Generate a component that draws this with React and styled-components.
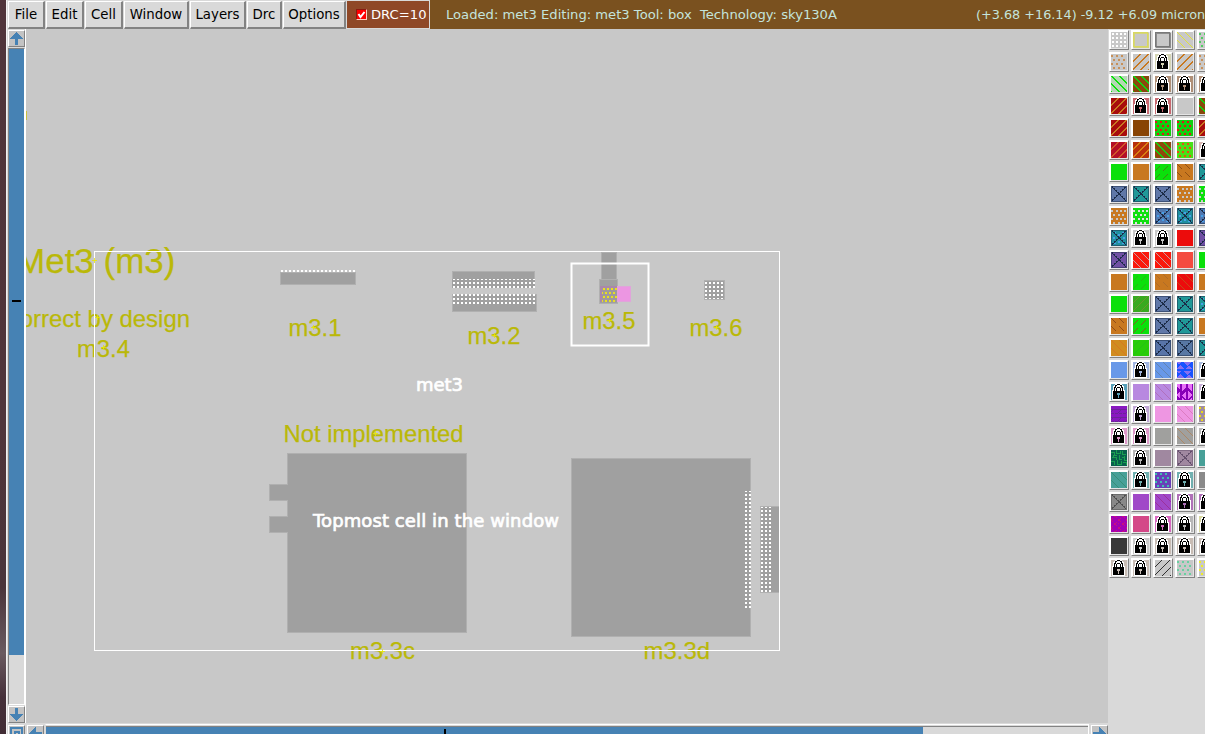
import React from 'react';
import styled, { createGlobalStyle } from 'styled-components';

const Global = createGlobalStyle`
  * { box-sizing: border-box; }
  body { margin: 0; overflow: hidden; background: #d9d9d9; }
`;

const Screen = styled.div`
  display: flex;
  width: 1205px;
  height: 734px;
  overflow: hidden;
  font: 13.33px "DejaVu Sans", sans-serif;
`;
const Desktop = styled.div`
  flex: 0 0 6px;
  background: linear-gradient(#50343a 0, #50353b 58%, #4a343a 80%, #6a5a60 89%, #45303a 95%, #412c34 100%);
`;
const Win = styled.div`
  flex: 1;
  min-width: 0;
  display: flex;
  flex-direction: column;
  background: #d9d9d9;
  border-left: 1px solid #f2f2f2;
`;
const TitleBar = styled.header`
  display: flex;
  flex: 0 0 29px;
  background: #7a511f;
  color: #c4e4dc;
  white-space: pre;
`;
const Menus = styled.nav`
  display: flex;
  gap: 1px;
  padding: 1px 0 0 1px;
  background: #d9d9d9;
`;
const MenuButton = styled.button`
  width: ${p => p.$w}px;
  height: 28px;
  padding: 0 0 1px;
  border: solid;
  border-width: 1px 2px 2px 1px;
  border-color: #fff #828282 #828282 #fff;
  background: #d9d9d9;
  color: #000;
  font: inherit;
`;
const Drc = styled.label`
  display: flex;
  align-items: center;
  gap: 4px;
  width: 83px;
  height: 28px;
  padding: 0 0 0 9px;
  border-bottom: 1px solid #d9d9d9;
  border-right: 1px solid #d9d9d9;
  background: #8f4827;
  color: #fff;
  font-size: 13.15px;
`;
const Check = styled.span`
  display: flex;
  width: 11px;
  height: 11px;
  background: #f00;
  border: solid;
  border-width: 1px;
  border-color: #8b1a10 #ffd0c0 #ffd0c0 #8b1a10;
`;
const Status = styled.div`
  flex: none;
  width: 546px;
  padding: 7px 0 0 16px;
  font-size: 13.13px;
`;
const Position = styled.div`
  padding-top: 7px;
  font-size: 12.8px;
`;
const Main = styled.main`
  display: flex;
  flex: 1;
  min-height: 0;
`;
const Work = styled.div`
  display: flex;
  flex-direction: column;
  width: 1101px;
`;
const WorkTop = styled.div`
  display: flex;
  flex: 0 0 694px;
`;
const VScroll = styled.div`
  display: flex;
  flex-direction: column;
  gap: 1px;
  width: 19px;
  padding: 1px 0 0 1px;
  border-right: 1px solid #fff;
`;
const WorkBottom = styled.div`
  display: flex;
  gap: 2px;
  padding: 2px 0 0 1px;
  height: 20px;
  align-items: flex-start;
`;
const ArrowButton = styled.div`
  display: flex;
  flex: none;
  width: 17px;
  height: 17px;
  border: solid;
  border-width: 1px;
  border-color: #fff #828282 #828282 #fff;
  background: #c3c3c3;
`;
const VTrack = styled.div`
  width: 17px;
  height: 657px;
  border: solid;
  border-width: 1px;
  border-color: #828282 #fff #fff #828282;
  background: linear-gradient(#4682b4 606px, #d9d9d9 606px);
  padding: 251px 2px 0 3px;
`;
const HTrack = styled.div`
  width: 1045px;
  height: 19px;
  margin: -1px 0 0 -1px;
  border: solid;
  border-width: 1px;
  border-color: #fff #fff #fff #d9d9d9;
  background: linear-gradient(#d9d9d9 1px, #828282 1px 2px, transparent 2px), linear-gradient(90deg, #4682b4 877px, #d9d9d9 877px);
  padding: 4px 0 0 398px;
`;
const Tick = styled.div`
  width: ${p => p.$w}px;
  height: ${p => p.$h}px;
  background: #000;
`;
const Drawing = styled.svg`
  display: block;
  flex: none;
  width: 1082px;
  height: 694px;
  background: #c8c8c8;
`;
const Palette = styled.aside`
  display: grid;
  grid-template-columns: repeat(5, 20px);
  grid-auto-rows: 20px;
  gap: 2px;
  padding: 1px 0 0 1px;
  flex: none;
  align-content: start;
`;
const Swatch = styled.div`
  padding: 1px;
  border: solid;
  border-width: 1px;
  border-color: #fff #828282 #828282 #fff;
  background: linear-gradient(135deg, #fff 50%, #e4e4e4 50%);
`;
const Tile = styled.svg`
  display: block;
  width: 16px;
  height: 16px;
  background: ${p => p.$bg};
`;

const Arrow = ({ turn = 0 }) => (
  <svg width="15" height="15" viewBox="0 0 15 15" shapeRendering="crispEdges">
    <path d="M7.5 1 14 8H9v6H6V8H1z" fill="#4682b4" transform={`rotate(${turn} 7.5 7.5)`} />
  </svg>
);

const G = '#c8c8c8', OR = '#c87820', GR = '#0be00b', BL = '#6078a8', TE = '#209898';
const plain = bg => ['plain', bg];
const lock = bg => ['lock', bg];
const x = bg => ['x', bg, '#1c2c48'];
const xd = bg => ['xd', bg, '#1c2c48'];
const up = (bg, fg, w) => ['up', bg, fg, w];
const dn = (bg, fg, w) => ['dn', bg, fg, w];
const dots = (bg, fg) => ['dots', bg, fg];

const swatches = [
  ['grid', G, '#fff'], ['frame', G, '#d8d860', 1], ['frame', G, '#787878', 1], dn(G, '#e2e238', 1), dots(G, '#50cc60'),
  dots(G, '#c89058'), up(G, OR, 2), lock('#d4d4b4'), up(G, OR, 2), dots(G, '#c89058'),
  dn('#b4d8b4', GR, 2), dn('#8a480c', '#10d410', 2), lock('#b09078'), lock('#b09078'), lock('#b09078'),
  up('#a80c0c', '#c87820', 2), lock('#c86870'), lock('#c86870'), plain(G), dn('#8a480c', '#10d410', 2),
  up('#a80c0c', '#c87820', 2), plain('#884404'), dots('#10d010', '#e01818'), dots('#10d010', '#e01818'), up('#a80c0c', '#c87820', 2),
  up('#b41028', '#d05828', 2), up('#b8300c', '#d88010', 2), dn('#90480c', '#18d010', 2), dots('#48e018', '#e85010'), lock('#d8b8b4'),
  plain(GR), plain(OR), ['ud', GR, '#448414'], ['dd', OR, '#905014'], x(TE),
  x(BL), x(TE), x(BL), ['holes', OR, G], ['holes', GR, G],
  ['holes', OR, G], ['holes', '#10e010', '#e0e0e0'], xd('#5078b0'), xd('#2090a0'), xd('#5078b0'),
  xd('#2090a0'), lock('#c8c8c8'), lock('#c8c8c8'), plain('#ec0c0c'), x('#7050a4'),
  x('#7050a4'), dn('#fa180c', '#c8a0a0', 1), dn('#fa180c', '#c8a0a0', 1), plain('#f44b40'), plain(GR),
  plain(OR), ['ud', GR, '#28b812'], ['dd', OR, '#b06c28'], dn('#ec0c0c', '#c84818', 1), plain(OR),
  plain(GR), up('#38aa20', '#68982c', 1), x(BL), x(TE), xd(TE),
  ['dd', OR, '#904c18'], ['ud', GR, '#806020'], x(BL), x(TE), plain(OR),
  dn('#d08c20', '#d87820', 1), up('#28cc08', '#20c414', 1), x('#5874a8'), x('#5878a4'), x(TE),
  plain('#6898e8'), lock('#a0b4e0'), dn('#6898e8', '#6484b0', 1), ['tri', '#1854ff', '#8870f0'], lock('#a8bce0'),
  lock('#58a0b8'), plain('#b888e0'), dn('#b888e0', '#b070bc', 1), ['tri2', '#8800b8', '#e870f8'], lock('#c8b0d8'),
  ['weave', '#8818c0', '#6c2498'], lock('#c0a8d4'), plain('#ee96e2'), dn('#ee96e2', '#dc7cc0', 1), dots('#a08ca0', '#e8d818'),
  lock('#dc98c8'), lock('#dc98c8'), plain('#a0a09e'), dn('#a0a09e', '#ac8868', 1), lock('#b8b8b8'),
  ['maze', '#08604c', '#18a050'], lock('#b4b4b4'), plain('#a088a0'), ['x', '#a088a0', '#64506c'], plain('#48a098'),
  dn('#48a098', '#389078', 1), lock('#70b0b0'), dots('#6840b8', '#40c0b0'), lock('#70b0b0'), plain('#8a8a8a'),
  ['x', '#888888', '#505050'], plain('#a048c8'), dn('#a048c8', '#9c309c', 1), lock('#b070b8'), lock('#b070b8'),
  ['rings', '#a000b4', '#c81080'], plain('#d44888'), lock('#d868c0'), lock('#b8b8b8'), lock('#d8d8a0'),
  plain('#383838'), lock('#c8c8c8'), lock('#c8bcb4'), lock('#c8bcb4'), lock('#c8bcb4'),
  lock('#c8bcb4'), lock('#c8bcb4'), up(G, '#303030', 1), dots(G, '#68d0a0'), dots(G, '#eeee28'),
];

// Builds a path of 1px squares for every tile pixel the test accepts.
const pixels = test => {
  let d = '';
  for (let py = 0; py < 16; py++) {
    for (let px = 0; px < 16; px++) if (test(px, py)) d += `M${px} ${py}h1v1h-1z`;
  }
  return d;
};
const rising = w => pixels((a, b) => (a + b + 2) % 8 < w);
const falling = w => pixels((a, b) => (a - b + 16) % 8 < w);
const risingDash = pixels((a, b) => (a + b + 2) % 8 === 0 && a % 8 < 5);
const fallingDash = pixels((a, b) => (a - b + 16) % 8 === 0 && a % 8 < 5);
const crossed = pixels((a, b) => a > 0 && a < 15 && (a === b || a + b === 15 || (a === b + 1 && a % 2) || (a + b === 14 && a % 2)));

const spots = (pitch, stagger) => {
  let d = '';
  for (let r = 0; r < 4; r++) {
    for (let c = 0; c < 4; c++) {
      const left = (stagger ? (r % 2) * 2 : 1) + c * pitch;
      if (left < 15) d += `M${left} ${1 + r * 4}h2v2h-2z`;
    }
  }
  return d;
};

const Fill = ({ kind, fg, bg, w }) => {
  const cross = (
    <g>
      <rect x=".5" y=".5" width="15" height="15" fill="none" stroke={fg} opacity=".5" />
      <path d={crossed} fill={fg} />
    </g>
  );
  switch (kind) {
    case 'grid': return <path d={spots(4, false)} fill={fg} />;
    case 'dots': return <path d={spots(5, true)} fill={fg} />;
    case 'holes': return <path d="M0 2h2v2H0zM5 2h2v2H5zM9 2h2v2H9zM13 2h2v2h-2zM2 6h2v2H2zM7 6h2v2H7zM11 6h2v2h-2zM0 10h2v2H0zM5 10h2v2H5zM9 10h2v2H9zM13 10h2v2h-2zM2 14h2v2H2zM7 14h2v2H7zM11 14h2v2h-2z" fill={fg} />;
    case 'frame': return <g fill="none" stroke={fg}><path d="M.5.5h14v14H.5z" /><path d="M1.500 1.500h14v14h-14z" opacity=".75" /></g>;
    case 'up': return <path d={rising(w)} fill={fg} />;
    case 'dn': return <path d={falling(w)} fill={fg} />;
    case 'ud': return <path d={risingDash} fill={fg} />;
    case 'dd': return <path d={fallingDash} fill={fg} />;
    case 'x': return cross;
    case 'xd': return <g><path d="M3 2h2v1H3zM11 2h2v1h-2zM7 4h2v2H7zM2 7h2v2H2zM12 7h2v2h-2zM7 11h2v2H7zM3 13h2v1H3zM11 13h2v1h-2z" fill="#48a0e8" />{cross}</g>;
    case 'tri': return <path d="M0 0h4L2 3zM6 0h8l-4 4zM0 7l3-4 4 4zM8 7l4-3 4 3zM0 9h4l-2 3zM6 9h8l-4 4zM0 16l3-4 4 4zM8 16l4-3 4 3z" fill={fg} />;
    case 'tri2': return <path d="M0 0h3v6L0 3zM5 0v7l4-4V0zM11 0v3l4 5V0zM3 7v8l-3-4zM5 12l4-5v8zM11 7l4 4-4 4zM5 16v-2l2 2zM12 16l3-3v3z" fill={fg} />;
    case 'weave': return <path d={pixels((a, b) => b % 8 === 3 || (b % 8 === 7 && a % 4 < 3) || ((a + b) % 8 === 5 && b % 8 > 3))} fill={fg} />;
    case 'rings': return <path d={pixels((a, b) => { const s = (a + b) % 8, t = (a - b + 16) % 8; return (s === 3 && t > 1) || (t === 4 && s > 1) || (a % 8 > 6 && b % 8 > 6); })} fill={fg} />;
    case 'maze': return <path d="M0 2h3v3h3M5 0v3h4V1M11 1v3h4M1 7h4v3M8 5v4h3M13 6v4h3M0 11h3v4M6 10v4h4v-3M12 12h3v3M2 5v2M11 7h2" fill="none" stroke={fg} />;
    case 'lock': return (
      <g>
        <path d="M2 6V2h1V1h1V0h7v1h1v1h1v4h1v10H1V6z" fill="#fff" />
        <path d="M3 7V3h1V1h2V0h3v1h2v2h1v4h1v8H2V7z" fill="#000" />
        <path d="M4 7V4h1V2h1V1h3v1h1v2h1v3h-1V4H9V3H6v1H5v3z" fill="#fff" />
        <path d="M6 4h3v3H6z" fill="#fff" />
        <path d="M6 9h3v2H8v3H7v-3H6z" fill={bg} />
      </g>
    );
    default: return null;
  }
};

const Rect = ({ r: [a, b, c, d], fill = '#a0a0a0', edge = '#b0b0b0' }) => (
  <rect x={a + .5} y={b + .5} width={c - a - 1} height={d - b - 1} fill={fill} stroke={edge} />
);

const labels = [
  [16, 273, 'Met3 (m3)', 35, 159.5], [2.5, 327, 'Correct by design', 24, 187.5], [77, 357, 'm3.4', 24, 53],
  [288.5, 336, 'm3.1', 24, 53], [467.5, 344, 'm3.2', 24, 53], [582.5, 329, 'm3.5', 24, 53], [689.5, 336, 'm3.6', 24, 53],
  [283.5, 442, 'Not implemented', 24, 180], [350, 659, 'm3.3c', 24, 65], [643.5, 659, 'm3.3d', 24, 66.5],
];
const marks = [[94, 260], [97, 317], [103, 347], [313, 327], [494, 335], [609, 320], [716, 327], [375, 433], [382, 651]];

const Layout = () => (
  <Drawing viewBox="26 29 1082 694">
    <defs>
      <pattern id="w" width="4" height="4" patternUnits="userSpaceOnUse" x="1" y="2">
        <rect width="2" height="2" fill="#fff" />
      </pattern>
      <pattern id="y" width="4" height="8" patternUnits="userSpaceOnUse" x="3" y="0">
        <path d="M0 0h2v2H0zM2 4h2v2H2z" fill="#e8e020" />
      </pattern>
    </defs>
    <g fill="#bab808" stroke="#bab808" strokeWidth=".25" fontFamily="Liberation Sans, sans-serif">
      {labels.map(([lx, ly, t, s, w]) => <text key={t} x={lx} y={ly} fontSize={s} textLength={w} lengthAdjust="spacingAndGlyphs">{t}</text>)}
    </g>
    <g shapeRendering="crispEdges">
      <Rect r={[280, 272, 356, 285]} />
      <path d="M281 270h75v2h-75z" fill="url(#w)" />
      <Rect r={[452, 271, 535, 280]} />
      <path d="M452 279h83v9h-83z" fill="#a0a0a0" />
      <path d="M453 279h82v9h-82z" fill="url(#w)" />
      <Rect r={[452, 294, 537, 312]} /><path d="M453 294h83v10h-83z" fill="url(#w)" />
      <Rect r={[601, 252, 617, 282]} /><Rect r={[599, 279, 618, 304]} />
      <path d="M600 286h17v16h-17z" fill="#aa88aa" />
      <path d="M602 288h15v14h-15z" fill="#a0989c" />
      <Rect r={[617, 286, 631, 302]} fill="#ec96e2" edge="#e0a4da" />
      <path d="M602 288h15v14h-15z" fill="url(#y)" />
      <Rect r={[704, 280, 725, 300]} /><path d="M705 281h18v18h-18z" fill="url(#w)" />
      <path d="M287.500 453.500h179v179h-179v-100h-18v-16h18v-16h-18v-16h18z" fill="#a0a0a0" stroke="#b0b0b0" />
      <Rect r={[571, 458, 751, 637]} /><path d="M745 491h6v117h-6z" fill="url(#w)" />
      <Rect r={[760, 506, 780, 593]} /><path d="M761 507h10v85h-10z" fill="url(#w)" />
      <rect x="94.500" y="251.500" width="685" height="399" fill="none" stroke="#fff" />
    </g>
    <rect x="571.500" y="263.500" width="77" height="82" fill="none" stroke="#fff" strokeWidth="2" />
    <path d={marks.map(([mx, my]) => `M${mx - 2} ${my + .5}h5M${mx + .5} ${my - 2}v5`).join('')} stroke="#e8e800" strokeOpacity=".8" />
    <path d="M26.500 111v9" stroke="#c8c040" />
    <g fill="#fff" stroke="#fff" strokeWidth=".7" fontFamily="DejaVu Sans, sans-serif" fontSize="18">
      <text x="416" y="391" textLength="47">met3</text>
      <text x="313" y="527" textLength="246">Topmost cell in the window</text>
    </g>
  </Drawing>
);

const menus = [['File', 37], ['Edit', 38], ['Cell', 38], ['Window', 65], ['Layers', 56], ['Drc', 35], ['Options', 63]];

export default function App() {
  return (
    <Screen>
      <Global />
      <Desktop />
      <Win>
        <TitleBar>
          <Menus>
            {menus.map(([t, w]) => <MenuButton key={t} $w={w}>{t}</MenuButton>)}
            <Drc>
              <Check><svg width="9" height="9"><path d="M1.500 4 3.500 7 7.500 2" fill="none" stroke="#fff" strokeWidth="2" /></svg></Check>
              DRC=10
            </Drc>
          </Menus>
          <Status>{'Loaded: met3 Editing: met3 Tool: box  Technology: sky130A'}</Status>
          <Position>(+3.68 +16.14) -9.12 +6.09 micron</Position>
        </TitleBar>
        <Main>
          <Work>
            <WorkTop>
              <VScroll>
                <ArrowButton><Arrow /></ArrowButton>
                <VTrack><Tick $w={9} $h={2} /></VTrack>
                <ArrowButton><Arrow turn={180} /></ArrowButton>
              </VScroll>
              <Layout />
            </WorkTop>
            <WorkBottom>
              <ArrowButton>
                <svg width="15" height="15" fill="none" stroke="#4682b4" strokeWidth="2"><path d="M2 2h11v11H2zM6 6h4v4H6z" /></svg>
              </ArrowButton>
              <ArrowButton><Arrow turn={-90} /></ArrowButton>
              <HTrack><Tick $w={2} $h={8} /></HTrack>
              <ArrowButton><Arrow turn={90} /></ArrowButton>
            </WorkBottom>
          </Work>
          <Palette>
            {swatches.map(([kind, bg, fg, w], i) => (
              <Swatch key={i}>
                <Tile $bg={bg} viewBox="0 0 16 16" shapeRendering="crispEdges"><Fill kind={kind} bg={bg} fg={fg} w={w} /></Tile>
              </Swatch>
            ))}
          </Palette>
        </Main>
      </Win>
    </Screen>
  );
}
